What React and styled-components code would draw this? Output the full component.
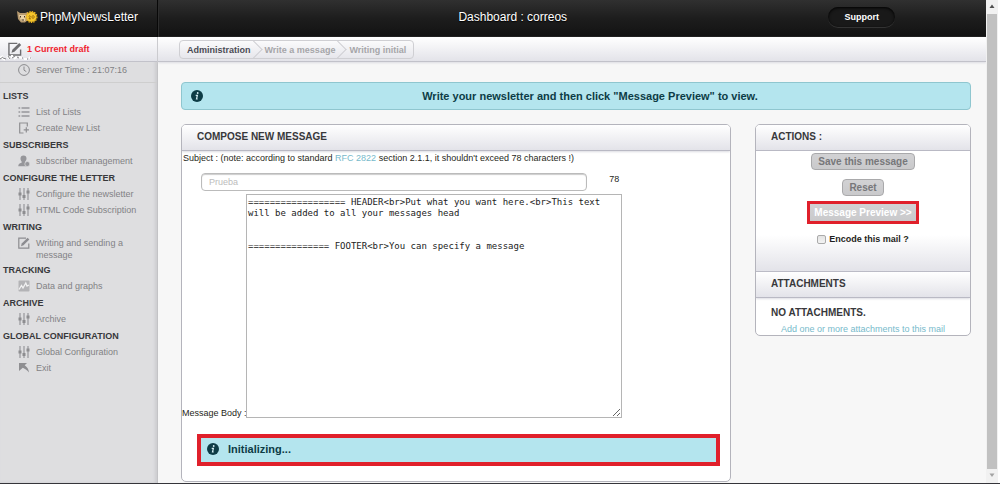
import { useState } from "react";
import styled, { createGlobalStyle } from "styled-components";

const GlobalStyle = createGlobalStyle`
    * {
        box-sizing: border-box;
    }
    body {
        margin: 0;
        background: #f7f7f7;
        color: #1f1f20;
        font-family: "Liberation Sans", Arial, sans-serif;
        font-size: 9px;
        line-height: 12px;
    }
    a {
        text-decoration: none;
    }
`;

const SlidersIcon = () => (
    <Icon viewBox="0 0 12 12">
        <path d="M2 0v12M6 0v12M10 0v12" stroke="#a2a2a5" strokeWidth="1.4" />
        <path d="M0.5 4.5h3v3h-3zM4.5 7h3v3h-3zM8.5 2.5h3v3h-3z" fill="#8d8d90" />
    </Icon>
);
const ClockIcon = () => (
    <Icon viewBox="0 0 12 12">
        <circle cx="6" cy="6" r="5.4" fill="none" stroke="#8b8b8e" />
        <path d="M6 2.5v3.7l2.3 1.4" fill="none" stroke="#8b8b8e" />
    </Icon>
);
const ListIcon = () => (
    <Icon viewBox="0 0 12 12">
        <path d="M0.5 2h1.7M0.5 6h1.7M0.5 10h1.7M3.5 2h8M3.5 6h8M3.5 10h8" stroke="#97979a" strokeWidth="1.6" />
    </Icon>
);
const NewListIcon = () => (
    <Icon viewBox="0 0 12 12">
        <path d="M5.5 11H1.7V1h7.6v3.5" fill="none" stroke="#8f8f92" strokeWidth="1.2" />
        <path d="M8.3 5.2v5.2M5.7 7.8h5.2" stroke="#8f8f92" strokeWidth="1.2" />
    </Icon>
);
const UserIcon = () => (
    <Icon viewBox="0 0 12 12">
        <path d="M5.5 0.5c2 0 3 1.3 3 3.1 0 1.4-.7 2.4-1.4 3.1l.3 1 1.6.6v2.9H0.3c0-2 .8-2.6 3.3-3.4l.1-1C3 6 2.5 5 2.5 3.6c0-1.8 1-3.1 3-3.1z" fill="#96969a" />
        <circle cx="9.3" cy="9" r="2.5" fill="#96969a" stroke="#dedee0" strokeWidth="0.7" />
    </Icon>
);
const WriteIcon = ({ color = "#8c8c90", size = 12 }) => (
    <Icon viewBox="0 0 12 12" $size={size}>
        <path d="M8 1.2H0.8v10h10V6.5" fill="none" stroke={color} strokeWidth="1.2" />
        <path d="M3 9.2l.7-2.6L9.6.8l1.7 1.7-5.8 5.8z" fill={color} />
    </Icon>
);
const GraphIcon = () => (
    <Icon viewBox="0 0 12 12">
        <rect x="0.5" y="0.5" width="11" height="11" rx="1" fill="#b3b3b6" />
        <path d="M1 9.5l2.5-4 1.5 2.5 2.8-5 1.2 3 2-1" fill="none" stroke="#f1f1f2" strokeWidth="1.3" />
    </Icon>
);
const ExitIcon = () => (
    <Icon viewBox="0 0 12 12">
        <path d="M1 1h8L6.7 3.3c2.5 1.7 4 4 4.3 7.2C9.3 8.3 7.3 6.8 4.8 5.7L1 9z" fill="#8f8f92" />
    </Icon>
);
const InfoIcon = () => (
    <Icon viewBox="0 0 12 12">
        <circle cx="6" cy="6" r="6" fill="#0d3c46" />
        <path d="M4.7 5.3h1.7L5.5 9h1.2" fill="none" stroke="#d5eff5" strokeWidth="1.2" />
        <circle cx="6.7" cy="3" r="0.9" fill="#d5eff5" />
    </Icon>
);
const LogoIcon = () => (
    <Logo viewBox="0 0 22 14">
        <path d="M1 1l3 2h5l3-1v8l-3 2.5H5L2 9z" fill="#b89b70" />
        <path d="M3 5h7l-1 6H5z" fill="#ead3a8" />
        <path d="M4.5 6v1.5M8.5 6v1.5M5.5 10h2.5" stroke="#453522" />
        <circle cx="15.5" cy="7" r="5" fill="#f6c62b" />
        <circle cx="15.5" cy="7" r="5.4" fill="none" stroke="#eeb41f" strokeWidth="1.2" strokeDasharray="1.5 1" />
        <path d="M12.8 6.5c1-1.5 2-.5 1.2.6L13 8.8h2M16.5 5.8c1.8-.8 2.3 2 .7 2.6-1.5.2-1.5-2-.7-2.6z" fill="none" stroke="#8a5a08" strokeWidth="0.8" />
    </Logo>
);

const menu = [
    { title: "LISTS", items: [["List of Lists", ListIcon], ["Create New List", NewListIcon]] },
    { title: "SUBSCRIBERS", items: [["subscriber management", UserIcon]] },
    { title: "CONFIGURE THE LETTER", items: [["Configure the newsletter", SlidersIcon], ["HTML Code Subscription", SlidersIcon]] },
    { title: "WRITING", items: [["Writing and sending a message", WriteIcon]] },
    { title: "TRACKING", items: [["Data and graphs", GraphIcon]] },
    { title: "ARCHIVE", items: [["Archive", SlidersIcon]] },
    { title: "GLOBAL CONFIGURATION", items: [["Global Configuration", SlidersIcon], ["Exit", ExitIcon]] },
];

const defaultBody = `================== HEADER<br>Put what you want here.<br>This text will be added to all your messages head


=============== FOOTER<br>You can specify a message`;

const App = () => {
    const [subject, setSubject] = useState("");
    const [body, setBody] = useState(defaultBody);
    const [encode, setEncode] = useState(false);

    return (
        <Screen>
            <GlobalStyle />
            <Page>
                <Header>
                    <Brand href="#">
                        <LogoIcon />
                        PhpMyNewsLetter
                    </Brand>
                    <HeaderMain>
                        <Title>Dashboard : correos</Title>
                        <Support href="#">Support</Support>
                    </HeaderMain>
                </Header>
                <Columns>
                    <Sidebar>
                        <Draft href="#">
                            <WriteIcon color="#6d6d70" size={14} />
                            <span>1 Current draft</span>
                            <BrokenGlyphs viewBox="0 0 32 8">
                                <path d="M0 4l3-2M1 3l4 3M7 2l3 3M12 1v3M14 5l3-2M19 3l3 1M24 5h3M29 3l2 2" stroke="#ffffff" strokeWidth="2" />
                                <path d="M0 5l3-2M3 4l3 1M8 2l2 3M12 4l3-2M17 3l2 1M22 4h1M27 5h1M30 4h1" stroke="#69696c" strokeWidth="0.8" />
                            </BrokenGlyphs>
                        </Draft>
                        <ServerTime>
                            <ClockIcon />
                            Server Time : 21:07:16
                        </ServerTime>
                        <nav>
                            {menu.map(({ title, items }) => (
                                <div key={title}>
                                    <MenuTitle>{title}</MenuTitle>
                                    {items.map(([label, ItemIcon]) => (
                                        <MenuItem href="#" key={label}>
                                            <ItemIcon />
                                            <span>{label}</span>
                                        </MenuItem>
                                    ))}
                                </div>
                            ))}
                        </nav>
                    </Sidebar>
                    <Main>
                        <SubBar>
                            <Breadcrumb>
                                <Crumb href="#" $active>Administration</Crumb>
                                <CrumbArrow />
                                <Crumb href="#">Write a message</Crumb>
                                <CrumbArrow />
                                <Crumb href="#">Writing initial</Crumb>
                            </Breadcrumb>
                        </SubBar>
                        <Content>
                            <Notice>
                                <InfoIcon />
                                <NoticeText>Write your newsletter and then click "Message Preview" to view.</NoticeText>
                            </Notice>
                            <Panels>
                                <Panel $fill>
                                    <PanelTitle>COMPOSE NEW MESSAGE</PanelTitle>
                                    <SubjectLabel htmlFor="subject">
                                        Subject : (note: according to standard <TextLink href="#">RFC 2822</TextLink> section 2.1.1, it shouldn't exceed 78 characters !)
                                    </SubjectLabel>
                                    <SubjectRow>
                                        <SubjectInput
                                            id="subject"
                                            placeholder="Prueba"
                                            maxLength={78}
                                            value={subject}
                                            onChange={(e) => setSubject(e.target.value)}
                                        />
                                        <span>{78 - subject.length}</span>
                                    </SubjectRow>
                                    <BodyRow>
                                        <BodyLabel htmlFor="body">Message Body :</BodyLabel>
                                        <BodyInput id="body" spellCheck={false} value={body} onChange={(e) => setBody(e.target.value)} />
                                    </BodyRow>
                                    <Status>
                                        <InfoIcon />
                                        Initializing...
                                    </Status>
                                </Panel>
                                <Panel>
                                    <PanelTitle>ACTIONS :</PanelTitle>
                                    <Actions>
                                        <Button type="button">Save this message</Button>
                                        <Button type="button">Reset</Button>
                                        <PreviewButton type="button">Message Preview &gt;&gt;</PreviewButton>
                                        <Encode>
                                            <Checkbox type="checkbox" checked={encode} onChange={(e) => setEncode(e.target.checked)} />
                                            Encode this mail ?
                                        </Encode>
                                    </Actions>
                                    <PanelTitle>ATTACHMENTS</PanelTitle>
                                    <Empty>NO ATTACHMENTS.</Empty>
                                    <AddLink href="#">Add one or more attachments to this mail</AddLink>
                                </Panel>
                            </Panels>
                        </Content>
                    </Main>
                </Columns>
            </Page>
            <ScrollBar>
                <ScrollArrow viewBox="0 0 12 14">
                    <path d="M3.5 8L6 4.5 8.5 8z" fill="#505050" />
                </ScrollArrow>
                <Thumb />
                <ScrollArrow viewBox="0 0 12 14">
                    <path d="M3.5 4.5L6 8l2.5-3.5z" fill="#a3a3a3" />
                </ScrollArrow>
            </ScrollBar>
        </Screen>
    );
};
export default App;

const Screen = styled.div`
    display: flex;
    min-height: 100vh;
    border-bottom: 1px solid #35353a;
`;
const Page = styled.div`
    flex: 1;
    display: flex;
    flex-direction: column;
`;
const Icon = styled.svg`
    flex: none;
    width: ${({ $size }) => $size || 12}px;
    height: ${({ $size }) => $size || 12}px;
`;
const Logo = styled.svg`
    width: 22px;
    height: 14px;
    flex: none;
`;

const Header = styled.header`
    display: flex;
    height: 37px;
    background: linear-gradient(#303030, #1d1d1d 50%, #121212);
    color: white;
    font-size: 12px;
`;
const Brand = styled.a`
    display: flex;
    align-items: center;
    gap: 2px;
    width: 158px;
    padding: 0 0 4px 16px;
    color: white;
    text-shadow: 0 1px 1px black;
    border-right: 1px solid #080808;
`;
const HeaderMain = styled.div`
    flex: 1;
    display: grid;
    grid-template-columns: 6fr 2fr;
    align-items: center;
    border-left: 1px solid #2d2d2d;
    padding: 0 37px 4px 92px;
`;
const Title = styled.h1`
    margin: 0;
    font-size: 12px;
    font-weight: 400;
    text-align: center;
    text-shadow: 0 1px 1px black;
`;
const Support = styled.a`
    justify-self: center;
    width: 67px;
    padding: 4px 0;
    border-radius: 10px;
    background: #191919;
    box-shadow: inset 0 1px 3px black, 0 1px 0 #333;
    color: white;
    font-size: 9px;
    font-weight: 700;
    text-align: center;
`;

const Columns = styled.div`
    flex: 1;
    display: flex;
`;
const Sidebar = styled.aside`
    width: 158px;
    background: #dedee0;
    border-right: 1px solid #c3c3c6;
    box-shadow: inset -2px 0 3px #ccccd0;
`;
const Draft = styled.a`
    position: relative;
    display: flex;
    align-items: center;
    gap: 5px;
    height: 25px;
    padding-left: 8px;
    background: linear-gradient(#fdfdfe, #e3e3e9);
    border-bottom: 1px solid #c2c2ca;
    color: #f0222e;
    font-weight: 700;
`;
const BrokenGlyphs = styled.svg`
    position: absolute;
    left: 0;
    bottom: -1px;
    width: 32px;
    height: 8px;
`;
const ServerTime = styled.div`
    display: flex;
    align-items: center;
    gap: 6px;
    height: 21px;
    padding: 0 0 5px 18px;
    border-bottom: 1px solid #cecece;
    margin-bottom: 4px;
    color: #828285;
`;
const MenuTitle = styled.h2`
    margin: 0;
    padding: 4px 3px 2px;
    font-size: 9px;
    line-height: 11px;
    font-weight: 700;
    color: #38383b;
`;
const MenuItem = styled.a`
    display: flex;
    gap: 6px;
    min-height: 16px;
    padding: 2px 20px 0 18px;
    color: #828285;
`;

const Main = styled.main`
    flex: 1;
    display: flex;
    flex-direction: column;
    min-width: 0;
`;
const SubBar = styled.div`
    display: flex;
    height: 25px;
    padding: 3px 21px;
    background: linear-gradient(#ffffff, #e3e3e9);
    border-bottom: 1px solid #c2c2ca;
    box-shadow: 0 1px 2px #dcdce2;
`;
const Breadcrumb = styled.nav`
    display: flex;
    align-items: center;
    height: 19px;
    border: 1px solid #cfcfd3;
    border-radius: 4px;
    padding: 0 7px;
    overflow: hidden;
`;
const Crumb = styled.a`
    color: ${({ $active }) => ($active ? "#4a4a54" : "#a6a6a9")};
    font-weight: 700;
`;
const CrumbArrow = styled.span`
    width: 13px;
    height: 13px;
    margin: 0 5px 0 -4px;
    border: 1px solid #cfcfd3;
    border-width: 1px 1px 0 0;
    transform: rotate(45deg);
`;
const Content = styled.div`
    flex: 1;
    display: flex;
    flex-direction: column;
    gap: 14px;
    padding: 20px 15px 1px 23px;
`;
const Notice = styled.div`
    display: flex;
    align-items: center;
    height: 28px;
    padding: 0 9px;
    border: 1px solid #8fc6cf;
    border-radius: 4px;
    background: #b4e5ee;
`;
const NoticeText = styled.p`
    flex: 1;
    margin: 0;
    padding-left: 16px;
    font-size: 11px;
    font-weight: 700;
    text-align: center;
    color: #0d3c46;
`;
const Panels = styled.div`
    flex: 1;
    display: grid;
    grid-template-columns: 550fr 216fr;
    gap: 24px;
`;
const Panel = styled.section`
    align-self: ${({ $fill }) => ($fill ? "stretch" : "start")};
    border: 1px solid #b4b4bc;
    border-radius: 5px;
    background: white;
    overflow: hidden;
`;
const PanelTitle = styled.h3`
    margin: 0;
    padding: 6px 15px 7px;
    background: linear-gradient(#ffffff, #e3e3e9);
    border-bottom: 1px solid #b9b9c4;
    box-shadow: 0 1px 2px #dcdce2;
    font-size: 10px;
    font-weight: 700;
    color: #38383b;
`;
const SubjectLabel = styled.label`
    display: block;
    padding: 1px;
`;
const TextLink = styled.a`
    color: #77bacb;
`;
const SubjectRow = styled.div`
    display: flex;
    gap: 22px;
    margin: 8px 0 3px 19px;
`;
const SubjectInput = styled.input`
    width: 73%;
    height: 18px;
    padding: 0 7px;
    border: 1px solid #bbb;
    border-radius: 4px;
    box-shadow: inset 0 1px 1px #ccc;
    font-family: inherit;
    font-size: 9px;
    &::placeholder {
        color: #bcbcbc;
    }
`;
const BodyRow = styled.div`
    display: flex;
    align-items: flex-end;
    gap: 1px;
`;
const BodyLabel = styled.label`
    width: 63px;
    line-height: 9px;
    white-space: nowrap;
`;
const BodyInput = styled.textarea`
    width: 376px;
    height: 224px;
    padding: 2px 1px;
    border: 1px solid #b5b5b5;
    font-family: "DejaVu Sans Mono", monospace;
    font-size: 9px;
    line-height: 11px;
    color: #222;
`;
const Status = styled.div`
    display: flex;
    align-items: center;
    gap: 9px;
    height: 32px;
    margin: 16px 10px 12px 15px;
    padding: 0 6px 2px;
    border: 4px solid #e0202b;
    background: #b4e5ee;
    color: #0d3c46;
    font-size: 11px;
    font-weight: 700;
`;

const Actions = styled.div`
    display: flex;
    flex-direction: column;
    align-items: center;
    padding: 2px 0 24px;
    background: linear-gradient(white 70%, #e3e3e9);
    border-bottom: 1px solid #b9b9c4;
`;
const Button = styled.button`
    height: 17px;
    margin-bottom: 9px;
    padding: 0 6px;
    border: 1px solid #a9a9ab;
    border-radius: 4px;
    background: linear-gradient(#d2d2d4, #c9c9cb);
    color: #77777a;
    font-family: inherit;
    font-size: 10px;
    font-weight: 700;
`;
const PreviewButton = styled(Button)`
    height: 23px;
    margin-top: -4px;
    padding: 0 4px;
    border: 3px solid #e0202b;
    border-radius: 0;
    color: white;
`;
const Encode = styled.label`
    display: flex;
    align-items: center;
    gap: 3px;
    padding-bottom: 2px;
    font-weight: 700;
`;
const Checkbox = styled.input`
    appearance: none;
    width: 9px;
    height: 9px;
    margin: 0;
    border: 1px solid #aaa;
    border-radius: 2px;
    background: linear-gradient(#e3e3e3, #f3f3f3);
    &:checked {
        background: #77bacb;
    }
`;
const Empty = styled.p`
    margin: 0;
    padding: 9px 15px 4px;
    font-size: 10px;
    font-weight: 700;
    color: #38383b;
`;
const AddLink = styled(TextLink)`
    display: block;
    text-align: center;
`;

const ScrollBar = styled.div`
    display: flex;
    flex-direction: column;
    align-items: center;
    width: 14px;
    background: #f1f1f1;
    border-right: 2px solid white;
`;
const ScrollArrow = styled.svg`
    width: 12px;
    height: 14px;
`;
const Thumb = styled.div`
    flex: 1;
    width: 10px;
    background: #c1c1c1;
`;
